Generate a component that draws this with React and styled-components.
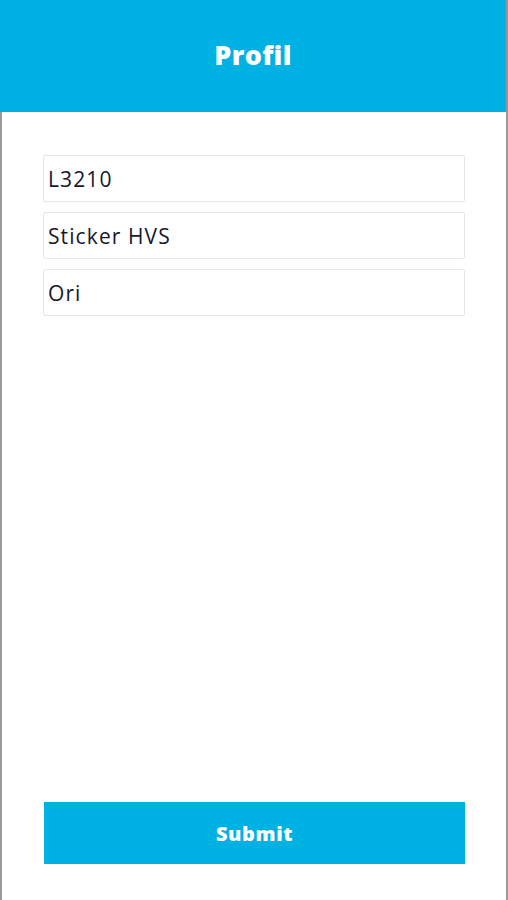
import React from "react";
import styled, { createGlobalStyle } from "styled-components";

const GlobalStyle = createGlobalStyle`
  html, body {
    margin: 0;
    padding: 0;
    background: #fff;
    font-family: "Open Sans", "Liberation Sans", sans-serif;
  }
  * { box-sizing: border-box; }
`;

function App() {
  const [fields, setFields] = React.useState(["L3210", "Sticker HVS", "Ori"]);

  const change = (i, value) => {
    const next = [...fields];
    next[i] = value;
    setFields(next);
  };

  return (
    <Page>
      <GlobalStyle />
      <Header>
        <Title>Profil</Title>
      </Header>
      <Body>
        <Fields>
          {fields.map((f, i) => (
            <Field key={i} value={f} onChange={(e) => change(i, e.target.value)} />
          ))}
        </Fields>
        <SubmitButton>Submit</SubmitButton>
      </Body>
    </Page>
  );
}

const Page = styled.div`
  width: 508px;
  height: 900px;
  display: flex;
  flex-direction: column;
  background: #fff;
`;

const Header = styled.div`
  height: 112px;
  padding-bottom: 3px;
  background: #00b2e3;
  display: flex;
  align-items: center;
  justify-content: center;
  border-right: 2px solid #8a9aa0;
`;

const Title = styled.h1`
  margin: 0;
  color: #fff;
  font-family: "Open Sans", "Lato", sans-serif;
  font-weight: 800;
  font-size: 27px;
  letter-spacing: 0.3px;
`;

const Body = styled.div`
  flex: 1;
  display: flex;
  flex-direction: column;
  padding: 43px 41px 36px 41px;
  border-left: 2px solid #9a9a9a;
  border-right: 2px solid #9a9a9a;
`;

const Fields = styled.div`
  display: flex;
  flex-direction: column;
  gap: 10px;
`;

const Field = styled.input`
  width: 100%;
  height: 47px;
  border: 1px solid #e6e6e6;
  border-radius: 2px;
  padding: 0 4px;
  font-family: "Open Sans", sans-serif;
  font-size: 21px;
  letter-spacing: 1.1px;
  color: #15182b;
  background: #fff;
  outline: none;
`;

const SubmitButton = styled.button`
  margin-top: auto;
  margin-left: 1px;
  height: 62px;
  border: none;
  background: #00b2e3;
  color: #fff;
  font-family: "Open Sans", "Lato", sans-serif;
  font-weight: 800;
  font-size: 20px;
  letter-spacing: 0.6px;
  cursor: pointer;
`;

export default App;
